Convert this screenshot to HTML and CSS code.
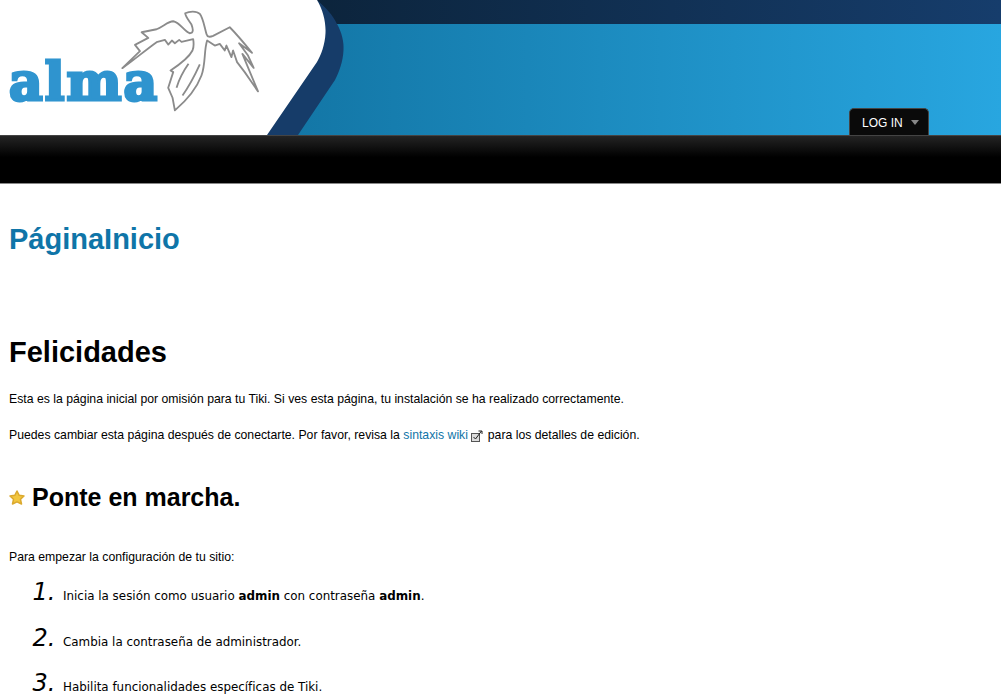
FILE: index.html
```html
<!DOCTYPE html>
<html lang="es">
<head>
    <meta charset="UTF-8">
    <meta name="viewport" content="width=device-width, initial-scale=1.0">
    <title>PáginaInicio</title>
    <link rel="stylesheet" href="styles.css">
</head>
<body>
    <header class="header">
        <svg class="header-bg" width="1001" height="135" viewBox="0 0 1001 135" aria-hidden="true">
            <defs>
                <linearGradient id="strip" x1="0" x2="1" y1="0" y2="0">
                    <stop offset="0" stop-color="#0b2238"/>
                    <stop offset="1" stop-color="#163d6c"/>
                </linearGradient>
                <linearGradient id="sky" x1="0" x2="1" y1="0" y2="0">
                    <stop offset="0" stop-color="#1274a3"/>
                    <stop offset="1" stop-color="#28a6e0"/>
                </linearGradient>
            </defs>
            <rect x="260" y="0" width="741" height="24" fill="url(#strip)"/>
            <rect x="260" y="24" width="741" height="111" fill="url(#sky)"/>
            <path d="M317 0C325 7 333 15 337 24C342 33 344 42 343.5 50C343 62 339 72 335 80L298 135H260Z" fill="#163c69"/>
            <path d="M0 0H317C323 10 326 22 325.5 33C325 45 321 55 317 62L267 135H0Z" fill="#fff"/>
        </svg>
        <div class="logo">
            <span class="logo-text">alma</span>
            <svg class="bird" width="143" height="107" viewBox="360 20 430 320" aria-hidden="true">
                <path d="M556 38C568 32 590 30 600 40C610 52 614 80 620 100C623 110 630 110 640 106L690 80C705 95 735 130 757 157L718 128L745 165L762 202L728 160L775 273L735 215L712 185L700 150L695 170L680 135L675 150L660 130L645 135L622 120C612 150 618 190 605 225C590 265 560 300 525 330L518 292L505 262L520 215L512 210C535 195 565 175 578 150C582 140 582 128 580 116L545 124L538 118L525 128L516 120L505 132L495 118L470 125C435 150 400 180 367 203L420 152L405 133L445 112L425 95L470 86C490 78 505 62 520 62C540 65 555 95 570 98C582 98 580 85 575 72C568 60 558 50 556 38Z" fill="#fff" stroke="#8b8b8b" stroke-width="5.5" stroke-linejoin="round"/>
                <path d="M600 192C585 225 570 255 548 285M566 190C552 210 538 235 530 262" fill="none" stroke="#8b8b8b" stroke-width="5.5"/>
            </svg>
        </div>
        <button class="login" type="button">LOG IN <span class="caret"></span></button>
    </header>
    <nav class="navbar"></nav>

    <main class="content">
        <h1 class="page-title">PáginaInicio</h1>
        <h1 class="big">Felicidades</h1>
        <p class="first">Esta es la página inicial por omisión para tu Tiki. Si ves esta página, tu instalación se ha realizado correctamente.</p>
        <p>Puedes cambiar esta página después de conectarte. Por favor, revisa la <a href="#">sintaxis wiki</a>
            <svg class="ext" width="12" height="12" viewBox="0 0 12 12" aria-hidden="true">
                <rect x=".5" y="3.5" width="8" height="8" fill="#ddd" stroke="#555"/>
                <path d="M2.5 7L4.5 9L10.5 1M7.5 1H11V4" fill="none" stroke="#222"/>
            </svg>
            para los detalles de edición.</p>
        <h2 class="march">
            <svg class="star" width="16" height="15" viewBox="0 0 16 15" aria-hidden="true">
                <path d="M8 1L10.2 5.3L15 6L11.5 9.3L12.5 14L8 11.8L3.5 14L4.5 9.3L1 6L5.8 5.3Z" fill="#f2c63e" stroke="#dba92e" stroke-width="1.5" stroke-linejoin="round"/>
            </svg>
            Ponte en marcha.
        </h2>
        <p class="intro">Para empezar la configuración de tu sitio:</p>
        <ol class="steps">
            <li>Inicia la sesión como usuario <strong>admin</strong> con contraseña <strong>admin</strong>.</li>
            <li>Cambia la contraseña de administrador.</li>
            <li>Habilita funcionalidades específicas de Tiki.</li>
        </ol>
    </main>
</body>
</html>
```

FILE: styles.css
```css
body {
    font-family: "Liberation Sans", Arial, sans-serif;
    font-size: 12.25px;
    color: #000;
    background: #fff;
    margin: 0;
    overflow: hidden;
}
.header {
    position: relative;
    height: 135px;
    display: flex;
    justify-content: space-between;
    align-items: flex-end;
    padding-right: 72px;
}
.header-bg {
    position: absolute;
    top: 0;
    left: 0;
}
.logo {
    position: relative;
    align-self: stretch;
    width: 300px;
}
.logo-text {
    position: absolute;
    left: 9px;
    top: 52px;
    font-family: "DejaVu Serif", serif;
    font-weight: bold;
    font-size: 52px;
    line-height: 60px;
    letter-spacing: 2px;
    color: #2f94cf;
    -webkit-text-stroke: 3px #2f94cf;
}
.bird {
    position: absolute;
    left: 120px;
    top: 7px;
}
.login {
    position: relative;
    width: 80px;
    height: 27px;
    padding: 2px 0 0 12px;
    text-align: left;
    font-family: "Liberation Sans", Arial, sans-serif;
    font-size: 12px;
    color: #fff;
    background: #0a0a0a;
    border: 1px solid #444;
    border-bottom: none;
    border-radius: 5px 5px 0 0;
}
.caret {
    display: inline-block;
    width: 0;
    height: 0;
    margin: 0 0 2px 5px;
    border-left: 4.5px solid transparent;
    border-right: 4.5px solid transparent;
    border-top: 5px solid #888;
}
.navbar {
    height: 47px;
    border-top: 1px solid #444;
    border-bottom: 1px solid #888;
    background: linear-gradient(#242424, #000 45%);
}
.content {
    padding: 0 9px;
}
.page-title {
    font-size: 29px;
    line-height: 32px;
    color: #0f75a8;
    margin: 39px 0 0;
}
.big {
    font-size: 29px;
    line-height: 34px;
    margin: 80px 0 0;
}
p {
    margin: 0;
    line-height: 15px;
}
.first {
    margin-top: 23px;
}
.first + p {
    margin-top: 21px;
}
a {
    color: #0f75a8;
    text-decoration: none;
}
.ext {
    vertical-align: -3px;
    margin: 0 1px 0 0;
}
.march {
    font-size: 25px;
    line-height: 28px;
    margin: 40px 0 0;
    display: flex;
    align-items: center;
    gap: 7px;
}
.intro {
    margin-top: 39px;
}
.steps {
    margin: 12px 0 0;
    padding-left: 54px;
    font-family: "DejaVu Sans", Verdana, sans-serif;
    font-size: 11.9px;
}
.steps li {
    line-height: 30px;
    margin-bottom: 11.5px;
}
.steps li::marker {
    font-family: "DejaVu Sans", Verdana, sans-serif;
    font-style: italic;
    font-size: 24px;
}
```
